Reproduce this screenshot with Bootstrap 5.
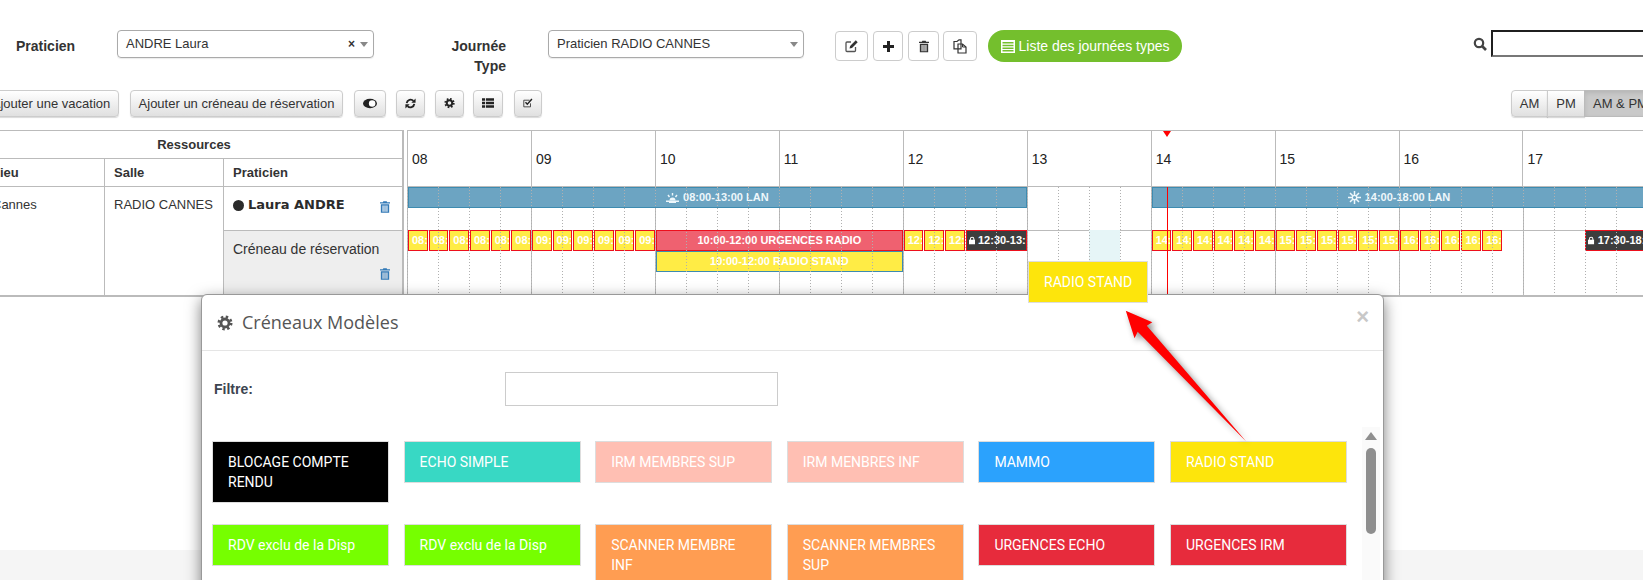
<!DOCTYPE html>
<html lang="fr">
<head>
<meta charset="utf-8">
<title>Journées types</title>
<link href="https://cdn.jsdelivr.net/npm/bootstrap@5.3.0/dist/css/bootstrap.min.css" rel="stylesheet">
<style>
html,body{margin:0;height:580px;overflow:hidden;background:#fff}
body{font-family:"Liberation Sans",Arial,sans-serif;font-size:14px;line-height:20px;color:#333;position:relative}
.pg{display:flex;flex-direction:column;height:580px;width:1643px;overflow:hidden}
/* top form */
.tb1{display:flex;align-items:flex-start;padding-top:30px;height:90px;flex:none}
.lbl{font-weight:700;padding-top:6px;flex:none}
.lbl-a{width:117px;padding-left:16px}
.lbl-b{width:70px;margin-left:62px;text-align:right}
.sel{flex:none;height:28px;border:1px solid #aaa;border-radius:4px;display:flex;align-items:center;padding:0 5px 0 8px;font-size:13px;box-shadow:0 1px 1px rgba(0,0,0,.08)}
.sel-a{width:257px}
.sel-b{width:256px;margin-left:42px}
.sel-x{margin-left:auto;font-weight:700;font-size:12px;margin-right:5px;color:#333}
.sel-v{width:0;height:0;border:4px solid transparent;border-top:5px solid #888;border-bottom:0}
.sel-b .sel-v{margin-left:auto}
.ibtn{flex:none;height:30px;margin-top:1px;padding:0;background:#fff;border:1px solid #ccc;border-radius:4px;display:flex;align-items:center;justify-content:center;color:#333}
.pill{flex:none;height:32px;width:194px;margin-left:11px;border-radius:16px;background:#74bf2d;border:0;color:#fff;font-size:14px;padding:0;display:flex;align-items:center;justify-content:center;gap:4px}
.pill:hover{background:#74bf2d;color:#fff}
.srch{flex:none;margin-left:291px;margin-top:7px;width:18px}
.srch-in{flex:none;width:200px;height:27px;border-style:solid;border-width:2px;border-color:#1f1f1f #777 #777 #1f1f1f;padding:0}
/* toolbar */
.tb2{display:flex;height:40px;flex:none;align-items:flex-start}
.gbtn{flex:none;height:27px;padding:0 8px 1px;font-size:13px;line-height:25px;color:#333;border:1px solid #ccc;border-radius:4px;background:linear-gradient(#fff,#e0e0e0);box-shadow:0 1px 1px rgba(0,0,0,.15);display:flex;align-items:center;justify-content:center;white-space:nowrap}
.gbtn:hover{color:#333;border-color:#ccc}
.gbtn-cut{padding-left:14px}
.seg{flex:none;display:flex;margin-left:969px}
.seg .gbtn{border-radius:0;margin-left:-1px}
.seg .gbtn:first-child{border-radius:4px 0 0 4px;margin-left:0}
.seg .on{background:#c9c9c9;border-color:#bbb;box-shadow:inset 0 2px 4px rgba(0,0,0,.1);width:80px;justify-content:flex-start}
/* schedule */
.sch{display:flex;flex:none;height:167px;position:relative;width:1800px}
.res{flex:none;width:422px;margin-left:-18px;height:167px;border-collapse:collapse;table-layout:fixed;border-right:2px solid #bbb;font-size:13px}
.res td,.res th{border:1px solid #bbb;padding:0 9px;vertical-align:top}
.res th{font-weight:700}
.r1{height:28px}.r1 th{padding-top:4px;padding-left:12px;text-align:center}
.r2{height:28px}.r2 th{padding-top:4px}
.r3{height:44px}.r3 td{padding-top:7px}
.r4{height:65px}
.res tr:last-child td,.res td.rs{border-bottom:2px solid #bbb}
.res td.rs{padding-top:8px}
.res .pc{background:#eee;padding-top:8px;font-size:14px}
.nm{font-family:"DejaVu Sans",sans-serif;font-weight:700;font-size:13px;display:flex;align-items:flex-start;gap:4px;color:#2b2b2b;padding-top:1px}
.nm-t{display:flex;align-items:center;gap:4px}
.dot{width:11px;height:11px;border-radius:50%;background:#2b2b2b;flex:none}
.tr-ic{display:block;margin:0 3px 0 auto;color:#337ab7;flex:none}
.nm .tr-ic{margin-top:6px}
.pc .tr-ic{margin-top:9px}
.tl{flex:none;margin-left:3px;width:1240px;display:grid;grid-template-columns:repeat(120,10.3333px);grid-template-rows:56px 21px 22px 21px 21px 23px;border-top:1px solid #bbb;border-bottom:2px solid #bbb;position:relative;height:167px;box-sizing:border-box}
.hh{grid-row:1;grid-column:span 12;border-left:1px solid #bbb;border-bottom:1px solid #bbb;padding:18px 0 0 4px;font-size:14px;color:#222;font-weight:400}
.tl-dots{grid-area:2/1/7/-1;background:repeating-linear-gradient(90deg,#b0b0b0 0 1px,transparent 1px 31px);-webkit-mask-image:repeating-linear-gradient(180deg,#000 0 1px,transparent 1px 3px);mask-image:repeating-linear-gradient(180deg,#000 0 1px,transparent 1px 3px)}
.tl-sol{grid-area:2/1/7/-1;background:repeating-linear-gradient(90deg,#bbb 0 1px,transparent 1px 124px)}
.tl-hl{grid-area:4/1/4/-1;border-top:1px solid #bbb}
.hov{grid-area:4/67/7/span 3;background:#e6f5f7}
.ev{color:#fff;font-size:11px;font-weight:700;line-height:19px;height:21px;margin-left:1px;white-space:nowrap;overflow:hidden;box-sizing:border-box;text-align:center}
.bar{grid-row:2;background:#6ca4c2;border:1px solid #3d8bb0;color:#eef7fb;display:flex;align-items:center;justify-content:center;gap:4px}
.slt{grid-row:4;background:#ffec45;border:1px solid #ed0f1c;padding-left:3px;text-align:left}
.urg{grid-row:4;background:#ef6170;border:1px solid #ed0f1c}
.std{grid-row:5;background:#ffec45;border:1px solid #3d8bb0}
.blk{grid-row:4;background:#3d3d3d;border:1px solid #ed0f1c;display:flex;align-items:center;gap:3px;padding-left:2px}
.now{position:absolute;left:760px;top:56px;bottom:0;width:1px;background:#f00;z-index:3}
.now-t{position:absolute;left:756px;top:0;width:0;height:0;border:4.5px solid transparent;border-top:6px solid #f00;border-bottom:0}
.drag{position:absolute;left:1028px;top:261px;width:120px;height:42px;background:#fde50c;border:1px solid #ddd;color:#fff;font-family:Roboto,sans-serif;font-size:14px;padding:10px 15px;z-index:5;white-space:nowrap}
.band{flex:none;margin-top:auto;height:30px;background:#f5f5f5}
/* modal */
.mdl{position:absolute;left:201px;top:294px;width:1183px;height:400px;z-index:4;display:block;border:1px solid #999;border-radius:6px;box-shadow:0 5px 15px rgba(0,0,0,.5);background:#fff}
.mdl .modal-header{height:56px;padding:0 15px;border-bottom:1px solid #e5e5e5;display:flex;align-items:center;position:relative}
.m-ttl{font-family:"Open Sans",sans-serif;font-size:18px;color:#555;font-weight:400;display:flex;align-items:center;gap:9px;margin:0}
.m-x{margin-left:auto;font-size:22px;font-weight:700;color:#c8c8c8;border:0;background:none;padding:0;line-height:1;margin-right:-1px;margin-top:-12px}
.m-flt{display:flex;align-items:center;padding:21px 0 21px 12px}
.m-flt label{width:291px;font-weight:700;color:#3c4450;flex:none}
.m-flt input{width:273px;height:34px;border:1px solid #ccc;flex:none;padding:0}
.m-wrap{display:flex;align-items:flex-start}
.tiles{display:grid;grid-template-columns:repeat(6,177px);column-gap:14.6px;row-gap:21px;align-items:start;padding:14px 0 0 10px;flex:none}
.tile{font-family:Roboto,sans-serif;font-size:14px;line-height:20px;color:#fff;border:1px solid #ddd;padding:10px 15px;height:42px}
.tile.two{height:62px}
.tscroll{flex:none;margin-left:15px;width:18px;height:200px;background:#fafafa;display:flex;flex-direction:column;align-items:center;padding-top:5px;gap:8px}
.tscroll i{width:0;height:0;border:6px solid transparent;border-bottom:8px solid #8e8e8e;border-top:0}
.tscroll b{width:10px;height:86px;border-radius:5px;background:#8e8e8e}
.arrow{position:absolute;left:1110px;top:300px;z-index:6;filter:drop-shadow(3px 3px 3px rgba(0,0,0,.45))}
</style>
</head>
<body>
<svg width="0" height="0" class="position-absolute">
<symbol id="gear" viewBox="0 0 16 16"><circle cx="8" cy="8" r="6.2" fill="none" stroke="currentColor" stroke-width="2.6" stroke-dasharray="2.43 2.44"/><circle cx="8" cy="8" r="4" fill="none" stroke="currentColor" stroke-width="2.8"/></symbol>
<symbol id="trash" viewBox="0 0 12 14"><path fill="currentColor" d="M4 0h4l.6 1.4H12v1.5H0V1.400h3.400zM1 3.600h10V14H1zm2 1.500v7.500h1.300V5.100zm2.350 0v7.500h1.300V5.100zm2.350 0v7.500H9V5.100z"/></symbol>
<symbol id="lock" viewBox="0 0 10 12"><path fill="currentColor" d="M5 0a3.600 3.600 0 0 1 3.600 3.600V5H10v7H0V5h1.400V3.600A3.600 3.600 0 0 1 5 0zm0 1.600a2 2 0 0 0-2 2V5h4V3.600a2 2 0 0 0-2-2z"/></symbol>
</svg>
<div class="pg">
  <div class="tb1">
    <div class="lbl lbl-a">Praticien</div>
    <div class="sel sel-a"><span>ANDRE Laura</span><span class="sel-x">×</span><span class="sel-v"></span></div>
    <div class="lbl lbl-b">Journée Type</div>
    <div class="sel sel-b"><span>Praticien RADIO CANNES</span><span class="sel-v"></span></div>
    <button class="ibtn" style="margin-left:31px;width:33px" aria-label="Modifier"><svg width="14" height="14" viewBox="0 0 14 14"><path fill="none" stroke="#555" stroke-width="1.300" d="M10.500 8v3.500a1 1 0 0 1-1 1H2a1 1 0 0 1-1-1V4a1 1 0 0 1 1-1h4"/><path fill="#333" d="M4.500 9.500l.6-2.500L10.800 1.300l1.900 1.900L7 8.900z"/></svg></button>
    <button class="ibtn" style="margin-left:5px;width:30px" aria-label="Ajouter"><svg width="13" height="13" viewBox="0 0 13 13"><path fill="#222" d="M5 1h3v4h4v3H8v4H5V8H1V5h4z"/></svg></button>
    <button class="ibtn" style="margin-left:5px;width:31px" aria-label="Supprimer"><svg width="10" height="13"><use href="#trash"/></svg></button>
    <button class="ibtn" style="margin-left:4px;width:34px" aria-label="Copier"><svg width="14" height="15" viewBox="0 0 14 15"><path fill="#fff" stroke="#333" stroke-width="1.200" d="M1 2.500h3L6 .8h2v9H1zM5 5h4.500L13 8v6H5z"/><path fill="none" stroke="#333" d="M9.500 5v3H13"/></svg></button>
    <button class="pill btn"><svg width="14" height="13" viewBox="0 0 14 13"><path fill="#fff" d="M0 0h14v13H0zm1.500 2v1.500h11V2zm0 2.700v1.500h11V4.700zm0 2.700v1.500h11V7.400zm0 2.700v1.400h11v-1.400z"/></svg>Liste des journées types</button>
    <svg class="srch" width="15" height="14" viewBox="0 0 15 14" preserveAspectRatio="xMinYMid"><circle cx="6" cy="6" r="4.200" fill="none" stroke="#444" stroke-width="2.200"/><path stroke="#444" stroke-width="2.600" d="M9 9l4 4"/></svg>
    <input class="srch-in" type="text" aria-label="Recherche">
  </div>
  <div class="tb2">
    <button class="gbtn gbtn-cut btn" style="margin-left:-23px;width:142px">Ajouter une vacation</button>
    <button class="gbtn btn" style="margin-left:11px;width:213px">Ajouter un créneau de réservation</button>
    <button class="gbtn btn" style="margin-left:11px;width:32px" aria-label="Basculer"><svg width="17" height="11" viewBox="0 0 15 10"><ellipse cx="7.500" cy="5" rx="7.500" ry="5" fill="#222"/><circle cx="9.800" cy="5" r="3.500" fill="#fff"/></svg></button>
    <button class="gbtn btn" style="margin-left:10px;width:29px" aria-label="Rafraîchir"><svg width="14" height="15" viewBox="0 0 13 14"><path fill="none" stroke="#222" stroke-width="2.200" d="M2 6.500a4.600 4.600 0 0 1 8-2.500M11 7.500a4.600 4.600 0 0 1-8 2.500"/><path fill="#222" d="M12.500 1v5.200H7.500zM.5 13V7.800h5z"/></svg></button>
    <button class="gbtn btn" style="margin-left:10px;width:29px" aria-label="Réglages"><svg width="14" height="14" color="#222"><use href="#gear"/></svg></button>
    <button class="gbtn btn" style="margin-left:9px;width:30px" aria-label="Liste"><svg width="16" height="12" viewBox="0 0 14 11"><path fill="#222" d="M0 0h3.500v3H0zM4.500 0H14v3H4.500zM0 4h3.500v3H0zM4.500 4H14v3H4.500zM0 8h3.500v3H0zM4.500 8H14v3H4.500z"/></svg></button>
    <button class="gbtn btn" style="margin-left:11px;width:28px" aria-label="Cocher"><svg width="15" height="14" viewBox="0 0 14 13"><path fill="none" stroke="#333" stroke-width="1.200" d="M10.500 7v4.900H1.100V2.600h8"/><path fill="none" stroke="#222" stroke-width="2" d="M3.500 5.500L6 8.200 12.500 1"/></svg></button>
    <div class="seg">
      <button class="gbtn btn" style="width:37px">AM</button>
      <button class="gbtn btn" style="width:38px">PM</button>
      <button class="gbtn btn on">AM &amp; PM</button>
    </div>
  </div>
  <div class="sch">
    <table class="res">
      <colgroup><col style="width:122px"><col style="width:119px"><col></colgroup>
      <tr class="r1"><th colspan="3">Ressources</th></tr>
      <tr class="r2"><th>Lieu</th><th>Salle</th><th>Praticien</th></tr>
      <tr class="r3">
        <td rowspan="2" class="rs">Cannes</td>
        <td rowspan="2" class="rs">RADIO CANNES</td>
        <td><div class="nm"><span class="nm-t"><span class="dot"></span>Laura ANDRE</span><svg class="tr-ic" width="10" height="12"><use href="#trash"/></svg></div></td>
      </tr>
      <tr class="r4"><td class="pc">Créneau de réservation<svg class="tr-ic" width="10" height="12"><use href="#trash"/></svg></td></tr>
    </table>
    <div class="tl">
      <div class="hh">08</div><div class="hh">09</div><div class="hh">10</div><div class="hh">11</div><div class="hh">12</div><div class="hh">13</div><div class="hh">14</div><div class="hh">15</div><div class="hh">16</div><div class="hh">17</div>
      <div class="tl-dots"></div><div class="tl-sol"></div><div class="tl-hl"></div><div class="hov"></div>
      <div class="ev bar" style="grid-column:1/span 60"><svg width="13" height="11" viewBox="0 0 13 11"><path fill="none" stroke="#eef7fb" stroke-width="1.400" d="M0 9.300h13M3 10.700h7M6.500 1v2.500M2 3l1.500 2M11 3L9.500 5"/><path fill="#eef7fb" d="M3.500 8.500a3 3 0 0 1 6 0z"/></svg>08:00-13:00 LAN</div>
      <div class="ev bar" style="grid-column:73/span 48"><svg width="13" height="13" viewBox="0 0 13 13"><g stroke="#eef7fb" stroke-width="1.500"><path d="M6.500 0v13M0 6.500h13M2 2l9 9M11 2l-9 9"/></g><circle cx="6.500" cy="6.500" r="2.200" fill="#6ca4c2" stroke="#eef7fb" stroke-width="1.300"/></svg>14:00-18:00 LAN</div>
      <div class="ev slt" style="grid-column:1/span 2">08:</div><div class="ev slt" style="grid-column:3/span 2">08:</div><div class="ev slt" style="grid-column:5/span 2">08:</div><div class="ev slt" style="grid-column:7/span 2">08:</div><div class="ev slt" style="grid-column:9/span 2">08:</div><div class="ev slt" style="grid-column:11/span 2">08:</div>
      <div class="ev slt" style="grid-column:13/span 2">09:</div><div class="ev slt" style="grid-column:15/span 2">09:</div><div class="ev slt" style="grid-column:17/span 2">09:</div><div class="ev slt" style="grid-column:19/span 2">09:</div><div class="ev slt" style="grid-column:21/span 2">09:</div><div class="ev slt" style="grid-column:23/span 2">09:</div>
      <div class="ev urg" style="grid-column:25/span 24">10:00-12:00 URGENCES RADIO</div>
      <div class="ev std" style="grid-column:25/span 24">10:00-12:00 RADIO STAND</div>
      <div class="ev slt" style="grid-column:49/span 2">12:</div><div class="ev slt" style="grid-column:51/span 2">12:</div><div class="ev slt" style="grid-column:53/span 2">12:</div>
      <div class="ev blk" style="grid-column:55/span 6"><svg width="11" height="13" class="flex-none"><use href="#lock"/></svg><span>12:30-13:</span></div>
      <div class="ev slt" style="grid-column:73/span 2">14:</div><div class="ev slt" style="grid-column:75/span 2">14:</div><div class="ev slt" style="grid-column:77/span 2">14:</div><div class="ev slt" style="grid-column:79/span 2">14:</div><div class="ev slt" style="grid-column:81/span 2">14:</div><div class="ev slt" style="grid-column:83/span 2">14:</div>
      <div class="ev slt" style="grid-column:85/span 2">15:</div><div class="ev slt" style="grid-column:87/span 2">15:</div><div class="ev slt" style="grid-column:89/span 2">15:</div><div class="ev slt" style="grid-column:91/span 2">15:</div><div class="ev slt" style="grid-column:93/span 2">15:</div><div class="ev slt" style="grid-column:95/span 2">15:</div>
      <div class="ev slt" style="grid-column:97/span 2">16:</div><div class="ev slt" style="grid-column:99/span 2">16:</div><div class="ev slt" style="grid-column:101/span 2">16:</div><div class="ev slt" style="grid-column:103/span 2">16:</div><div class="ev slt" style="grid-column:105/span 2">16:</div>
      <div class="ev blk" style="grid-column:115/span 6"><svg width="11" height="13" class="flex-none"><use href="#lock"/></svg><span>17:30-18:</span></div>
      <div class="now-t"></div><div class="now"></div>
    </div>
  </div>
  <div class="band"></div>
</div>
<div class="drag">RADIO STAND</div>
<div class="mdl modal-content">
  <div class="modal-header">
    <h4 class="m-ttl"><svg width="16" height="16" color="#555"><use href="#gear"/></svg>Créneaux Modèles</h4>
    <button class="m-x" aria-label="Fermer">×</button>
  </div>
  <div class="m-flt"><label>Filtre:</label><input type="text" aria-label="Filtre"></div>
  <div class="m-wrap">
    <div class="tiles">
      <div class="tile two" style="background:#000">BLOCAGE COMPTE RENDU</div>
      <div class="tile" style="background:#38d8c4">ECHO SIMPLE</div>
      <div class="tile" style="background:#ffbfb3">IRM MEMBRES SUP</div>
      <div class="tile" style="background:#ffbfb3">IRM MENBRES INF</div>
      <div class="tile" style="background:#2ba2fd">MAMMO</div>
      <div class="tile" style="background:#fde50c">RADIO STAND</div>
      <div class="tile" style="background:#76ff00">RDV exclu de la Disp</div>
      <div class="tile" style="background:#76ff00">RDV exclu de la Disp</div>
      <div class="tile two" style="background:#ff9d52">SCANNER MEMBRE INF</div>
      <div class="tile two" style="background:#ff9d52">SCANNER MEMBRES SUP</div>
      <div class="tile" style="background:#e72b3c">URGENCES ECHO</div>
      <div class="tile" style="background:#e72b3c">URGENCES IRM</div>
    </div>
    <div class="tscroll"><i></i><b></b></div>
  </div>
</div>
<svg class="arrow" width="150" height="150" viewBox="1110 300 150 150"><polygon fill="#f00" points="1125.800,310.700 1152.300,322.300 1146.800,325.700 1246.400,441.700 1137.700,331.700 1134.500,338.300"/></svg>
</body>
</html>
